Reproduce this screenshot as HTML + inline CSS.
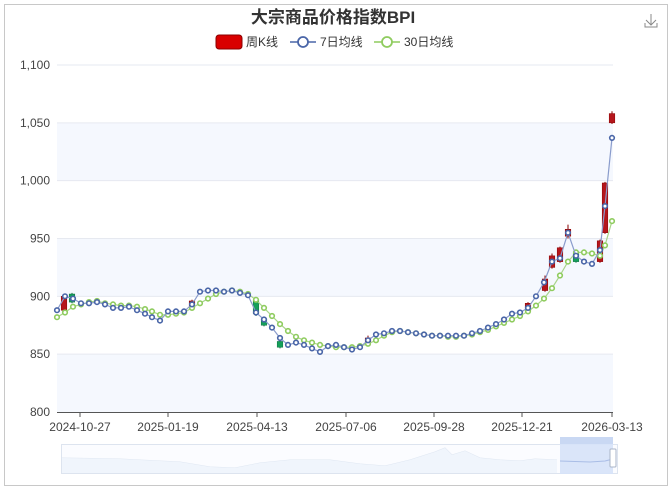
<!DOCTYPE html>
<html><head><meta charset="utf-8"><style>
html,body{margin:0;padding:0;background:#fff;}
body{width:670px;height:489px;overflow:hidden;position:relative;font-family:"Liberation Sans","Noto Sans CJK SC",sans-serif;}
#frame{position:absolute;left:4px;top:4px;width:662px;height:480px;border:1px solid #c8c8c8;}
</style></head><body>
<div id="frame"></div>
<svg id="s" width="670" height="489" style="position:absolute;left:0;top:0" font-family="Liberation Sans, Noto Sans CJK SC, sans-serif"></svg>
<script>
var s=document.getElementById('s');var h='';
function Y(v){return 412-(v-800)*1.1567;}
// bands
[[1050,1000],[950,900],[850,800]].forEach(function(b){h+='<rect x="57" y="'+Y(b[0])+'" width="556" height="'+(Y(b[1])-Y(b[0]))+'" fill="#f5f8fe"/>';});
[1100,1050,1000,950,900,850].forEach(function(v){h+='<line x1="57" x2="613" y1="'+Y(v)+'" y2="'+Y(v)+'" stroke="#e6e9f0" stroke-width="1"/>';});
var yl=[[1100,'1,100'],[1050,'1,050'],[1000,'1,000'],[950,'950'],[900,'900'],[850,'850'],[800,'800']];
yl.forEach(function(a){h+='<text x="50" y="'+(Y(a[0])+4)+'" text-anchor="end" font-size="12" fill="#444">'+a[1]+'</text>';});
h+='<line x1="57" x2="613" y1="412.5" y2="412.5" stroke="#555" stroke-width="1"/>';
var xl=[[80,'2024-10-27'],[168,'2025-01-19'],[257,'2025-04-13'],[346,'2025-07-06'],[434,'2025-09-28'],[522,'2025-12-21'],[612,'2026-03-13']];
xl.forEach(function(a){h+='<line x1="'+a[0]+'" x2="'+a[0]+'" y1="412" y2="417" stroke="#555"/><text x="'+a[0]+'" y="431" text-anchor="middle" font-size="12" fill="#444">'+a[1]+'</text>';});
var blue=[[57,888],[65,900],[73,898],[81,894],[89,894],[97,895],[105,893],[113,890],[121,890],[129,891],[137,888],[145,885],[152,882],[160,879],[168,887],[176,887],[184,887],[192,893],[200,904],[208,905],[216,905],[224,904],[232,905],[240,903],[248,901],[256,886],[264,880],[272,873],[280,864],[288,858],[296,860],[304,858],[312,855],[320,852],[328,857],[336,858],[344,856],[352,854],[360,856],[368,862],[376,867],[384,868],[392,870],[400,870],[408,869],[416,868],[424,867],[432,866],[440,866],[448,866],[456,866],[464,866],[472,868],[480,870],[488,873],[496,876],[504,880],[512,885],[520,886],[528,890],[536,900],[544,912],[552,930],[560,933],[568,955],[576,935],[584,930],[592,928],[600,940],[605,978],[612,1037]];
var green=[[57,882],[65,886],[73,891],[81,893],[89,895],[97,896],[105,894],[113,893],[121,892],[129,892],[137,891],[145,889],[152,887],[160,884],[168,884],[176,885],[184,886],[192,890],[200,894],[208,898],[216,902],[224,904],[232,905],[240,904],[248,902],[256,897],[264,890],[272,883],[280,876],[288,870],[296,865],[304,862],[312,860],[320,858],[328,857],[336,856],[344,856],[352,856],[360,857],[368,859],[376,862],[384,866],[392,869],[400,870],[408,869],[416,868],[424,867],[432,866],[440,866],[448,865],[456,865],[464,866],[472,867],[480,869],[488,871],[496,874],[504,877],[512,880],[520,883],[528,887],[536,892],[544,898],[552,907],[560,918],[568,930],[576,938],[584,938],[592,937],[600,935],[605,944],[612,965]];
// candles [x,open,close,high,low]
var c=[[64,888,900,901,887],[72,902,895,903,894],[192,890,896,897,889],[256,897,885,898,883],[280,861,856,863,855],[264,880,875,881,874],[368,860,864,866,859],[528,888,894,895,887],[545,905,915,918,904],[552,925,935,937,924],[560,930,942,943,929],[568,952,958,962,950],[576,937,930,938,929],[600,930,948,949,929],[605,955,998,999,954],[612,1050,1058,1060,1049]];
c.forEach(function(k){var up=k[2]>k[1];var col=up?'#b5161c':'#14a05a';var t=Y(Math.max(k[1],k[2])),b=Y(Math.min(k[1],k[2]));h+='<line x1="'+k[0]+'" x2="'+k[0]+'" y1="'+Y(k[3])+'" y2="'+Y(k[4])+'" stroke="'+(up?'#8a0000':'#0c7040')+'"/><rect x="'+(k[0]-2.8)+'" y="'+t+'" width="5.6" height="'+Math.max(1,b-t)+'" fill="'+col+'" stroke="'+(up?'#8a0000':'#0c7040')+'" stroke-width="0.5"/>';});
function line(p,col,pt){var d=p.map(function(a){return a[0]+','+Y(a[1]).toFixed(1)}).join(' ');h+='<polyline points="'+d+'" fill="none" stroke="'+col+'" stroke-width="1.2"/>';p.forEach(function(a){h+='<circle cx="'+a[0]+'" cy="'+Y(a[1]).toFixed(1)+'" r="2.3" fill="#fff" stroke="'+pt+'" stroke-width="1.6"/>';});}
line(green,'#a8d48a','#8fcc5f');
line(blue,'#8a9ccc','#4a66a8');
// title & legend
h+='<text x="333" y="23" text-anchor="middle" font-size="17" font-weight="bold" fill="#333">大宗商品价格指数BPI</text>';
h+='<rect x="216" y="35" width="26" height="14" rx="3" fill="#d90000" stroke="#8a0000"/><text x="246" y="46" font-size="12" fill="#333">周K线</text>';
h+='<line x1="290" x2="316" y1="42" y2="42" stroke="#4a66a8" stroke-width="1.5"/><circle cx="303" cy="42" r="5" fill="#fff" stroke="#4a66a8" stroke-width="1.8"/><text x="320" y="46" font-size="12" fill="#333">7日均线</text>';
h+='<line x1="374" x2="400" y1="42" y2="42" stroke="#8fcc5f" stroke-width="1.5"/><circle cx="387" cy="42" r="5" fill="#fff" stroke="#8fcc5f" stroke-width="1.8"/><text x="404" y="46" font-size="12" fill="#333">30日均线</text>';
// download icon
h+='<path d="M651 14v11M646 20l5 5 5-5M645 23v4h12v-4" fill="none" stroke="#888" stroke-width="1"/>';
// datazoom
h+='<rect x="61.5" y="444.5" width="556" height="29" fill="#fbfcff" stroke="#dde4ef"/>';
h+='<path d="M62 458 L120 459 L180 462 L210 467 L235 468 L260 463 L290 460 L330 460 L360 464 L385 466 L410 460 L435 452 L445 448 L452 455 L465 451 L480 458 L500 460 L520 461 L535 459 L557 460" fill="none" stroke="#dfe7f2" stroke-width="1"/>';
h+='<path d="M62 458 L120 459 L180 462 L210 467 L235 468 L260 463 L290 460 L330 460 L360 464 L385 466 L410 460 L435 452 L445 448 L452 455 L465 451 L480 458 L500 460 L520 461 L535 459 L557 460 L557 473 L62 473Z" fill="#f0f5fc"/>';
h+='<rect x="560" y="437" width="53" height="37" fill="#d6e2f8" opacity="0.9"/><rect x="560" y="437" width="53" height="7" fill="#c9d8f3"/>';
h+='<path d="M560 461 L590 462 L605 461 L613 459" fill="none" stroke="#a9bde6"/>';
h+='<rect x="610" y="449" width="6" height="18" rx="1" fill="#fff" stroke="#aab5c8"/>';
s.innerHTML=h;
</script>
</body></html>
